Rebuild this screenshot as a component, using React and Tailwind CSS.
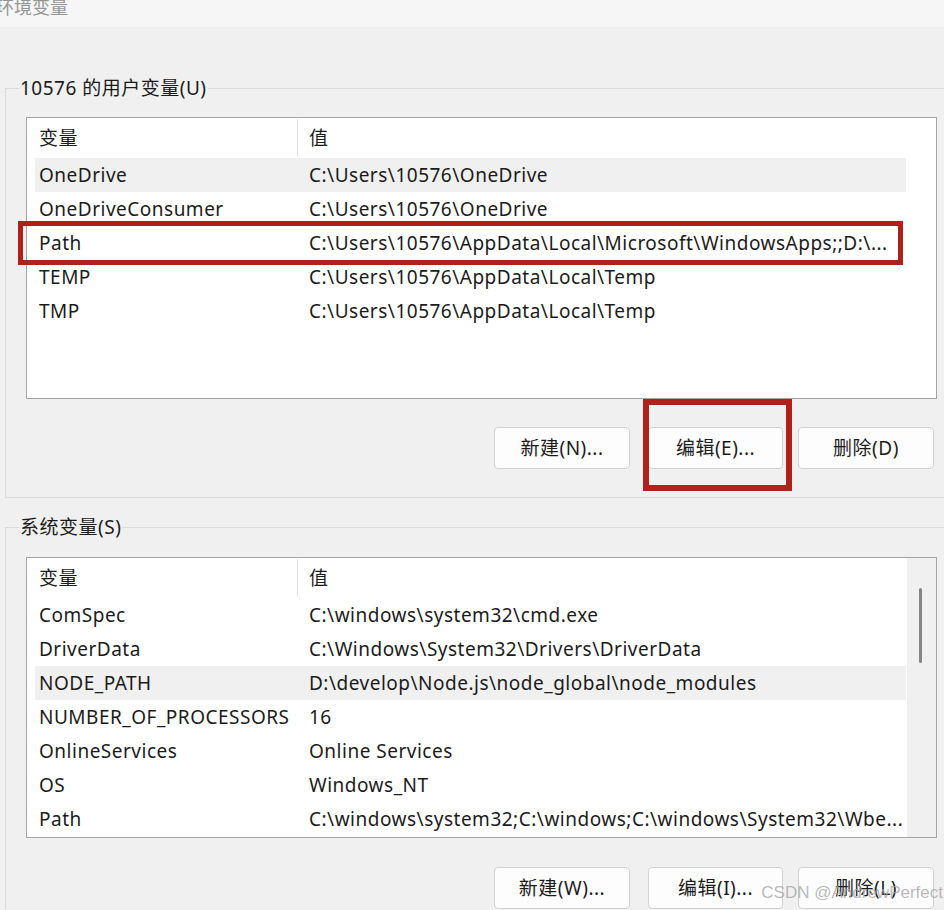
import React from "react";

const FONT = { fontFamily: '"Noto Sans", "Noto Sans CJK SC", sans-serif' };

const userRows = [
  ["OneDrive", "C:\\Users\\10576\\OneDrive", true],
  ["OneDriveConsumer", "C:\\Users\\10576\\OneDrive", false],
  ["Path", "C:\\Users\\10576\\AppData\\Local\\Microsoft\\WindowsApps;;D:\\...", false],
  ["TEMP", "C:\\Users\\10576\\AppData\\Local\\Temp", false],
  ["TMP", "C:\\Users\\10576\\AppData\\Local\\Temp", false],
];

const sysRows = [
  ["ComSpec", "C:\\windows\\system32\\cmd.exe", false],
  ["DriverData", "C:\\Windows\\System32\\Drivers\\DriverData", false],
  ["NODE_PATH", "D:\\develop\\Node.js\\node_global\\node_modules", true],
  ["NUMBER_OF_PROCESSORS", "16", false],
  ["OnlineServices", "Online Services", false],
  ["OS", "Windows_NT", false],
  ["Path", "C:\\windows\\system32;C:\\windows;C:\\windows\\System32\\Wbe...", false],
];

function Header() {
  return (
    <div className="flex h-[40px] items-center">
      <div className="flex h-[38px] w-[271px] items-center border-r border-[#e6e6e6] pl-[12px]">变量</div>
      <div className="pl-[11px]">值</div>
    </div>
  );
}

function Row({ name, value, hl }) {
  return (
    <div className={"ml-[8px] flex h-[34px] w-[871px] items-center " + (hl ? "bg-[#f0f0f0]" : "")}>
      <div className="w-[263px] overflow-hidden whitespace-nowrap pl-[4px]">{name}</div>
      <div className="overflow-hidden whitespace-nowrap pl-[11px]">{value}</div>
    </div>
  );
}

function Btn({ children, w }) {
  return (
    <div className={"flex h-[42px] items-center justify-center rounded-[4px] border border-[#d3d3d3] bg-[#fdfdfd] " + w}>
      {children}
    </div>
  );
}

export default function App() {
  return (
    <div
      className="relative h-[910px] w-[944px] overflow-hidden bg-[#f0f0f0] text-[19px] tracking-[0.5px] text-[#1b1b1b]"
      style={FONT}
    >
      <div className="h-[32px] bg-[#f6f6f6]">
        <div className="-ml-[4px] -mt-[5px] text-[18px] leading-[24px] tracking-normal text-[#959595]">环境变量</div>
      </div>

      <fieldset className="ml-[5px] mt-[49px] w-[960px] border border-[#dadada] pb-[28px] pt-[17px]">
        <legend className="ml-[13px] px-[1px] leading-[24px]">10576 的用户变量(U)</legend>
        <div className="ml-[20px] flex h-[282px] w-[911px] flex-col border border-[#a3a3a3] bg-white">
          <div className="w-[880px]">
            <Header />
            {userRows.map(([n, v, h]) => (
              <Row key={n} name={n} value={v} hl={h} />
            ))}
          </div>
        </div>
        <div className="mt-[28px] flex pl-[488px]">
          <Btn w="w-[136px]">新建(N)...</Btn>
          <div className="w-[18px]" />
          <Btn w="w-[135px]">编辑(E)...</Btn>
          <div className="w-[15px]" />
          <Btn w="w-[136px]">删除(D)</Btn>
        </div>
      </fieldset>

      <fieldset className="ml-[5px] mt-[17px] w-[960px] border border-[#dadada] pb-[28px] pt-[18px]">
        <legend className="ml-[13px] px-[1px] leading-[24px]">系统变量(S)</legend>
        <div className="ml-[20px] flex h-[281px] w-[911px] border border-[#a3a3a3] bg-white">
          <div className="w-[880px]">
            <Header />
            {sysRows.map(([n, v, h], i) => (
              <Row key={i} name={n} value={v} hl={h} />
            ))}
          </div>
          <div className="h-full w-[29px] bg-[#f0f0f0] pl-[12px] pt-[30px]">
            <div className="h-[75px] w-[3px] rounded-full bg-[#858585]" />
          </div>
        </div>
        <div className="mt-[29px] flex pl-[488px]">
          <Btn w="w-[136px]">新建(W)...</Btn>
          <div className="w-[18px]" />
          <Btn w="w-[135px]">编辑(I)...</Btn>
          <div className="w-[15px]" />
          <Btn w="w-[136px]">删除(L)</Btn>
        </div>
      </fieldset>

      <div className="pointer-events-none absolute left-[18px] top-[221px] h-[44px] w-[885px] border-[5px] border-[#b1211b]" />
      <div className="pointer-events-none absolute left-[643px] top-[399px] h-[92px] w-[149px] border-[6px] border-[#b1211b]" />
      <div
        className="pointer-events-none absolute right-[1px] top-[882px] text-[17px] leading-[22px] tracking-normal text-[#a8a8a8]/80"
        style={{ fontFamily: '"Liberation Sans", sans-serif' }}
      >
        CSDN @AndrewPerfect
      </div>
    </div>
  );
}
